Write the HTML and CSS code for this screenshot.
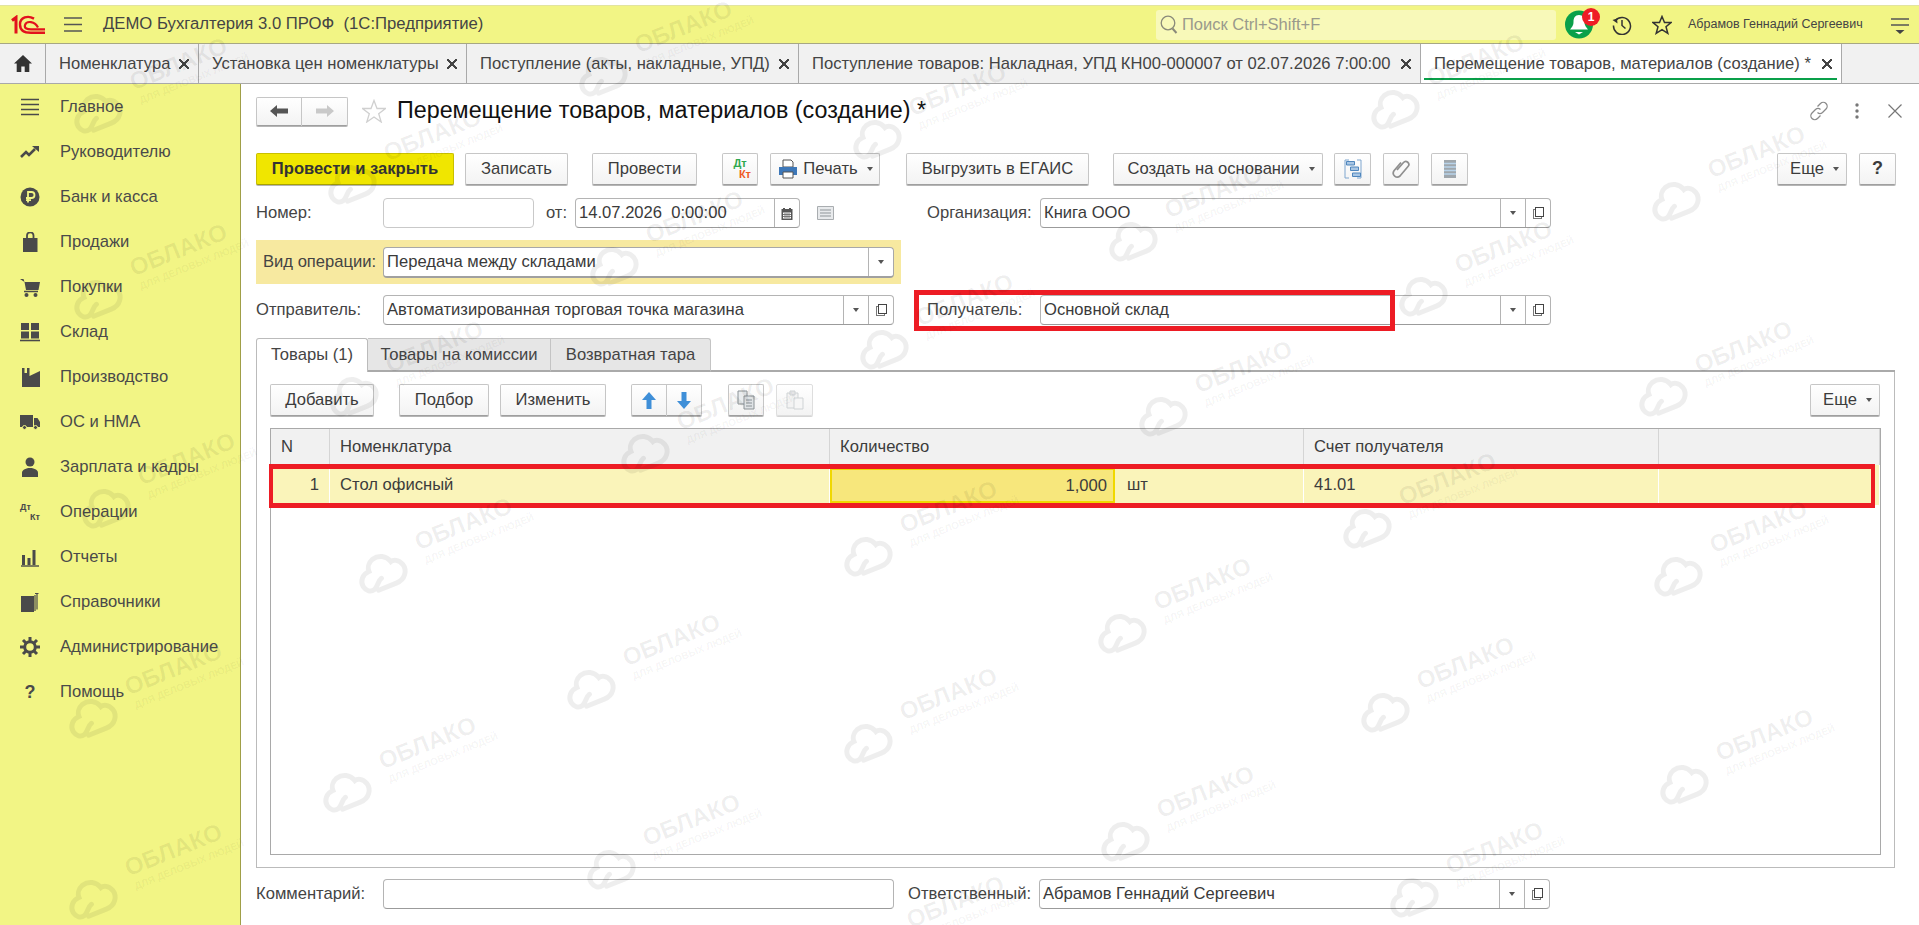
FILE: index.html
```html
<!DOCTYPE html>
<html lang="ru">
<head>
<meta charset="utf-8">
<title>Перемещение товаров, материалов (создание)</title>
<link rel="stylesheet" href="styles.css">
</head>
<body>
<div class="app">
  <header class="topbar">
    <svg class="logo" viewBox="0 0 34 19" width="34" height="19"><path d="M1 5.5 L5 2.5 V18.5" fill="none" stroke="#e2121d" stroke-width="3"/><path d="M23 3.6 C17 .2 9 2 9 9.5 C9 16 14 17.8 20 17.8 H34" fill="none" stroke="#e2121d" stroke-width="2.4"/><path d="M27 12.5 C24 6 15.5 5.5 14 10 C13 13.6 16.5 14.4 20 14.4 H34" fill="none" stroke="#e2121d" stroke-width="2.2"/></svg>
    <svg class="burger" viewBox="0 0 18 15" width="18" height="15"><path d="M0 1h18M0 7.5h18M0 14h18" stroke="#555" stroke-width="1.4"/></svg>
    <span class="app-title">ДЕМО Бухгалтерия 3.0 ПРОФ &nbsp;(1С:Предприятие)</span>
    <div class="search">
      <svg viewBox="0 0 18 20" width="18" height="20"><circle cx="8" cy="8" r="6.8" fill="none" stroke="#8a8a7a" stroke-width="1.3"/><path d="M12.5 13.5l4 4.5" stroke="#8a8a7a" stroke-width="2"/></svg>
      <span>Поиск Ctrl+Shift+F</span>
    </div>
    <div class="bell">
      <svg viewBox="0 0 28 29" width="28" height="29"><circle cx="14" cy="14.5" r="14" fill="#0aa04a"/><path d="M14 5c-4 0-5.500 3-5.500 7 0 4-2.500 6-3.500 7.500h18c-1-1.500-3.500-3.500-3.500-7.500 0-4-1.500-7-5.500-7z" fill="#fff"/><path d="M10 22h8l-4 2.500z" fill="#fff"/></svg>
      <span class="badge">1</span>
    </div>
    <svg class="hist" viewBox="0 0 20 20" width="20" height="20"><path d="M3.500 5.500A8.500 8.500 0 1 1 1.500 10.500" fill="none" stroke="#333" stroke-width="1.500"/><path d="M0.500 5l4.500-1.500.5 5z" fill="#333"/><path d="M10 5v5.500l3.500 3" fill="none" stroke="#333" stroke-width="1.500"/></svg>
    <svg class="star" viewBox="0 0 20 20" width="20" height="20"><path d="M10 1.500l2.500 6h6.500l-5 4.300 1.800 6.500L10 14.700l-5.800 3.600 1.800-6.500-5-4.300h6.500z" fill="none" stroke="#333" stroke-width="1.500"/></svg>
    <span class="user">Абрамов Геннадий Сергеевич</span>
    <svg class="menu" viewBox="0 0 18 17" width="18" height="17"><path d="M0 1h18M0 7h18" stroke="#555" stroke-width="1.400"/><path d="M4.500 12h9l-4.500 4z" fill="#444"/></svg>
  </header>

  <nav class="tabs">
    <div class="tab t0"><svg viewBox="0 0 18 17" width="18" height="17"><path d="M9 0L0 8.500h2.700V17h4.600v-5.500h3.400V17h4.600V8.500H18z" fill="#333"/></svg></div>
    <div class="tab t1"><span>Номенклатура</span><i class="x"></i></div>
    <div class="tab t2"><span>Установка цен номенклатуры</span><i class="x"></i></div>
    <div class="tab t3"><span>Поступление (акты, накладные, УПД)</span><i class="x"></i></div>
    <div class="tab t4"><span>Поступление товаров: Накладная, УПД КН00-000007 от 02.07.2026 7:00:00</span><i class="x"></i></div>
    <div class="tab t5 active"><span>Перемещение товаров, материалов (создание) *</span><i class="x"></i></div>
  </nav>

  <div class="main">
    <aside class="side">
      <a class="item"><svg viewBox="0 0 20 20"><path d="M1 2.500h18M1 7.500h18M1 12.500h18M1 17.500h18" stroke="#4a4a4a" stroke-width="1.300"/></svg><span>Главное</span></a>
      <a class="item"><svg viewBox="0 0 20 20"><path d="M1 15l5-5 3 3 6-6" fill="none" stroke="#4a4a4a" stroke-width="2.600"/><path d="M12 4h7v6z" fill="#4a4a4a"/></svg><span>Руководителю</span></a>
      <a class="item"><svg viewBox="0 0 20 20"><circle cx="10" cy="10" r="9.500" fill="#4a4a4a"/><path d="M8 15.500V5h3.500a3 3 0 0 1 0 6H6M6 13.200h5" fill="none" stroke="#f2f585" stroke-width="1.800"/></svg><span>Банк и касса</span></a>
      <a class="item"><svg viewBox="0 0 20 20"><path d="M3 6h14.500v14H3z" fill="#4a4a4a"/><path d="M7 9V3.500a3 3 0 0 1 6.500 0V9" fill="none" stroke="#4a4a4a" stroke-width="1.800"/></svg><span>Продажи</span></a>
      <a class="item"><svg viewBox="0 0 20 20"><path d="M0 2h3.500l1 3H20l-1.500 8H6L4.500 5" fill="#4a4a4a"/><path d="M4 14.500h14" stroke="#4a4a4a" stroke-width="1.500"/><circle cx="6.500" cy="18" r="2" fill="#4a4a4a"/><circle cx="15.500" cy="18" r="2" fill="#4a4a4a"/></svg><span>Покупки</span></a>
      <a class="item"><svg viewBox="0 0 20 20"><path d="M1 1h8v7H1zM11 1h8v7h-8zM1 9.500h8v7H1zM11 9.500h8v7h-8z" fill="#4a4a4a"/><path d="M0 18.500h20" stroke="#4a4a4a" stroke-width="1.600"/></svg><span>Склад</span></a>
      <a class="item"><svg viewBox="0 0 20 20"><path d="M2 1h2.500v5H7V1h2.500v8L20 4v16H2z" fill="#4a4a4a"/></svg><span>Производство</span></a>
      <a class="item"><svg viewBox="0 0 20 20"><path d="M0 3h13v12H0zM14 6h3.500L20 10v5h-6z" fill="#4a4a4a"/><circle cx="4.500" cy="15.500" r="2" fill="#4a4a4a" stroke="#f2f585"/><circle cx="15.500" cy="15.500" r="2" fill="#4a4a4a" stroke="#f2f585"/></svg><span>ОС и НМА</span></a>
      <a class="item"><svg viewBox="0 0 20 20"><circle cx="10" cy="5" r="4.500" fill="#4a4a4a"/><path d="M2 20v-4.500c0-2 3-4.500 8-4.500s8 2.500 8 4.500V20z" fill="#4a4a4a"/></svg><span>Зарплата и кадры</span></a>
      <a class="item"><span class="dtkt"><b>Дт</b><b>Кт</b></span><span>Операции</span></a>
      <a class="item"><svg viewBox="0 0 20 20"><path d="M2 8h3v10H2zM7.500 11h3v7h-3zM12.500 3h3v15h-3z" fill="#4a4a4a"/><path d="M1 19h18" stroke="#4a4a4a" stroke-width="1.400"/></svg><span>Отчеты</span></a>
      <a class="item"><svg viewBox="0 0 20 20"><path d="M1 4h13v16H1z" fill="#4a4a4a"/><path d="M15 3v16M17 1.500v16M15 1.500h3.500" fill="none" stroke="#4a4a4a" stroke-width="1.200"/></svg><span>Справочники</span></a>
      <a class="item"><svg viewBox="0 0 20 20"><circle cx="10" cy="10" r="5.300" fill="none" stroke="#4a4a4a" stroke-width="3"/><path d="M10 0v4M10 16v4M0 10h4M16 10h4M3 3l3 3M14 14l3 3M17 3l-3 3M6 14l-3 3" stroke="#4a4a4a" stroke-width="3"/></svg><span>Администрирование</span></a>
      <a class="item"><b class="help">?</b><span>Помощь</span></a>
    </aside>

    <main class="content">
      <div class="titlebar">
        <div class="btngroup nav">
          <button class="btn arrow"><svg viewBox="0 0 18 14" width="18" height="14"><path d="M0 7l7-6v3.500h11v5H7V13z" fill="#555"/></svg></button>
          <button class="btn arrow"><svg viewBox="0 0 18 14" width="18" height="14"><path d="M18 7l-7-6v3.500H0v5h11V13z" fill="#c9c9c9"/></svg></button>
        </div>
        <svg class="fav" viewBox="0 0 24 24" width="24" height="24"><path d="M12 1.500l3 8h8.500l-6.800 5.200 2.500 8.300-7.200-5-7.200 5 2.500-8.300L.5 9.500H9z" fill="none" stroke="#d0d0d0" stroke-width="1.300"/></svg>
        <h1>Перемещение товаров, материалов (создание) *</h1>
        <div class="winctl">
          <svg viewBox="0 0 20 20" width="20" height="20"><path d="M8.500 5.500l3-3a3.800 3.800 0 0 1 5.500 5.500l-3.500 3.500a3.800 3.800 0 0 1-5 0M11.500 14.500l-3 3a3.800 3.800 0 0 1-5.500-5.500l3.500-3.500a3.800 3.800 0 0 1 5 0" fill="none" stroke="#8a8a8a" stroke-width="1.300"/></svg>
          <svg class="kebab" viewBox="0 0 4 16" width="4" height="16"><circle cx="2" cy="2" r="1.700" fill="#777"/><circle cx="2" cy="8" r="1.700" fill="#777"/><circle cx="2" cy="14" r="1.700" fill="#777"/></svg>
          <svg class="winx" viewBox="0 0 14 14" width="14" height="14"><path d="M.5.500l13 13M13.500.500l-13 13" stroke="#777" stroke-width="1.200"/></svg>
        </div>
      </div>

      <div class="toolbar">
        <button class="btn primary b-post">Провести и закрыть</button>
        <button class="btn b-save">Записать</button>
        <button class="btn b-post2">Провести</button>
        <button class="btn b-ico b-dt"><span class="dk"><b class="dk-d">Дт</b><b class="dk-k">Кт</b></span></button>
        <button class="btn b-print"><svg viewBox="0 0 18 20" width="18" height="20"><path d="M4 1h8l2 2v5H4z" fill="#fff" stroke="#555"/><path d="M0 8h18v8H0z" fill="#3d77b8"/><path d="M4 13h10v6H4z" fill="#fff" stroke="#555"/></svg><span>Печать</span><i class="tri"></i></button>
        <button class="btn b-egais">Выгрузить в ЕГАИС</button>
        <button class="btn b-create"><span>Создать на основании</span><i class="tri"></i></button>
        <button class="btn b-ico b-struct"><svg viewBox="0 0 18 20" width="18" height="20"><path d="M5 1H1v18h4M13 1h4v18h-4" fill="none" stroke="#7ea6cf"/><path d="M2.500 2.500h8v3.500h-8zM6.500 8h8v3.500h-8zM8.500 14h8v3.500h-8z" fill="#a8c6e4" stroke="#4f86bd"/></svg></button>
        <button class="btn b-ico b-clip"><svg viewBox="0 0 18 20" width="18" height="20"><path d="M5 11l6.500-7.500a3 3 0 0 1 4.500 4L8 17a4 4 0 0 1-6-5.200L9 3.500" fill="none" stroke="#8f8f8f" stroke-width="1.700"/></svg></button>
        <button class="btn b-ico b-list"><svg viewBox="0 0 14 20" width="14" height="20"><path d="M1 1h12v18H1z" fill="#9fa7ad"/><path d="M1 4.500h12M1 8h12M1 11.500h12M1 15h12" stroke="#b8d3ea" stroke-width="1.700"/></svg></button>
        <div class="spacer"></div>
        <button class="btn b-more"><span>Еще</span><i class="tri"></i></button>
        <button class="btn b-q"><b>?</b></button>
      </div>

      <div class="row r1">
        <label class="lbl l-main">Номер:</label>
        <div class="field f-num"></div>
        <label class="lbl l-from">от:</label>
        <div class="field f-date"><span class="val">14.07.2026 &nbsp;0:00:00</span><span class="fbtn"><svg viewBox="0 0 12 13" width="12" height="13"><path d="M.5 2h11v11H.5z" fill="#555"/><path d="M2 5.500h8v6H2z" fill="#fff"/><path d="M3 1v2M9 1v2" stroke="#555" stroke-width="2"/><path d="M2 7.500h8M2 9.500h8M4 6v5M6 6v5M8 6v5" stroke="#777"/></svg></span></div>
        <svg class="docico" viewBox="0 0 17 14" width="17" height="14"><path d="M.5.500h16v13H.5z" fill="#e8eaec" stroke="#a9adb0"/><path d="M3 4h11M3 7h11M3 10h11" stroke="#8f9599"/></svg>
        <label class="lbl l-org">Организация:</label>
        <div class="field f-wide"><span class="val">Книга ООО</span><span class="fbtn"><i class="tri"></i></span><span class="fbtn"><i class="open"></i></span></div>
      </div>

      <div class="optype">
        <label class="lbl l-op">Вид операции:</label>
        <div class="field f-wide strong"><span class="val">Передача между складами</span><span class="fbtn"><i class="tri"></i></span></div>
      </div>

      <div class="row r3">
        <label class="lbl l-main">Отправитель:</label>
        <div class="field f-wide"><span class="val">Автоматизированная торговая точка магазина</span><span class="fbtn"><i class="tri"></i></span><span class="fbtn"><i class="open"></i></span></div>
        <label class="lbl l-rcv">Получатель:</label>
        <div class="field f-wide"><span class="val">Основной склад</span><span class="fbtn"><i class="tri"></i></span><span class="fbtn"><i class="open"></i></span></div>
        <div class="mark mark-rcv"></div>
      </div>

      <section class="panel">
        <div class="tabhead">
          <div class="ptab on w1">Товары (1)</div>
          <div class="ptab w2">Товары на комиссии</div>
          <div class="ptab w3">Возвратная тара</div>
          <div class="tabfill"></div>
        </div>
        <div class="panel-body">
          <div class="toolbar2">
            <button class="btn b-add">Добавить</button>
            <button class="btn b-pick">Подбор</button>
            <button class="btn b-edit">Изменить</button>
            <div class="btngroup updown">
              <button class="btn arrow"><svg viewBox="0 0 14 17" width="14" height="17"><path d="M7 0l7 8H9.500v9h-5V8H0z" fill="#3f8fd8"/></svg></button>
              <button class="btn arrow"><svg viewBox="0 0 14 17" width="14" height="17"><path d="M7 17l7-8H9.500V0h-5v9H0z" fill="#3f8fd8"/></svg></button>
            </div>
            <button class="btn b-copy"><svg viewBox="0 0 18 20" width="18" height="20"><path d="M1 1h9v13H1z" fill="#e9ecee" stroke="#8b9296"/><path d="M7 6h10v13H7z" fill="#dfe3e6" stroke="#8b9296"/><path d="M9 10h6M9 13h6M9 16h6" stroke="#8b9296"/></svg></button>
            <button class="btn b-paste dis"><svg viewBox="0 0 18 20" width="18" height="20"><path d="M1 3h11v15H1z" fill="#f3f3f3" stroke="#cfd3d5"/><path d="M4 1h5v4H4z" fill="#e5e5e5" stroke="#cfd3d5"/><path d="M8 8h9v11H8z" fill="#f6f6f6" stroke="#cfd3d5"/></svg></button>
            <div class="spacer"></div>
            <button class="btn b-more2"><span>Еще</span><i class="tri"></i></button>
          </div>
          <div class="grid">
            <div class="ghead">
              <div class="gc">N</div><div class="gc">Номенклатура</div><div class="gc">Количество</div><div class="gc">Счет получателя</div><div class="gc"></div>
            </div>
            <div class="grow">
              <div class="gc num">1</div>
              <div class="gc">Стол офисный</div>
              <div class="gc qty"><span class="qtyval">1,000</span><span class="unit">шт</span></div>
              <div class="gc">41.01</div>
              <div class="gc"></div>
            </div>
            <div class="mark mark-row"></div>
          </div>
        </div>
      </section>

      <div class="row r-bottom">
        <label class="lbl l-main">Комментарий:</label>
        <div class="field f-wide"></div>
        <label class="lbl l-resp">Ответственный:</label>
        <div class="field f-resp"><span class="val">Абрамов Геннадий Сергеевич</span><span class="fbtn"><i class="tri"></i></span><span class="fbtn"><i class="open"></i></span></div>
      </div>
    </main>
  </div>

  <svg class="wm" width="1919" height="925" viewBox="0 0 1919 925">
    <defs>
      <g id="u">
        <g transform="rotate(-22)">
          <text class="wm-t" text-anchor="middle" x="-3" y="-2">ОБЛАКО</text>
          <text class="wm-s" text-anchor="middle" x="6" y="13">ДЛЯ ДЕЛОВЫХ ЛЮДЕЙ</text>
        </g>
        <path class="wm-c" transform="translate(-89 40) rotate(-22)" d="M-9 16H10C20 16 25 8 23 1C21-5 16-7 13-6C11-13 4-17-3-15C-9-13-11-8-11-5C-18-5-23 1-22 7C-21 12-17 15-13 14C-9 13-6 7-2 6"/>
      </g>
    </defs>
    <use href="#u" x="185" y="72"/><use href="#u" x="185" y="258"/><use href="#u" x="193" y="467"/><use href="#u" x="180" y="677"/><use href="#u" x="180" y="858"/>
    <use href="#u" x="439" y="143"/><use href="#u" x="441" y="355"/><use href="#u" x="470" y="532"/><use href="#u" x="434" y="751"/>
    <use href="#u" x="690" y="35"/><use href="#u" x="701" y="225"/><use href="#u" x="732" y="412"/><use href="#u" x="678" y="648"/><use href="#u" x="698" y="828"/>
    <use href="#u" x="964" y="98"/><use href="#u" x="971" y="308"/><use href="#u" x="955" y="515"/><use href="#u" x="955" y="702"/><use href="#u" x="962" y="910"/>
    <use href="#u" x="1220" y="200"/><use href="#u" x="1250" y="375"/><use href="#u" x="1209" y="592"/><use href="#u" x="1212" y="800"/>
    <use href="#u" x="1482" y="68"/><use href="#u" x="1510" y="255"/><use href="#u" x="1454" y="487"/><use href="#u" x="1472" y="671"/><use href="#u" x="1501" y="856"/>
    <use href="#u" x="1763" y="160"/><use href="#u" x="1750" y="355"/><use href="#u" x="1765" y="535"/><use href="#u" x="1771" y="743"/>
  </svg>
</div>
</body>
</html>
```
FILE: styles.css
```css
* { box-sizing: border-box; }
html, body { margin: 0; padding: 0; height: 100%; overflow: hidden; background: #fff; }
body { font: 16.6px/1.2 "Liberation Sans", Arial, sans-serif; color: #333; }
.app { position: relative; width: 1919px; height: 925px; display: flex; flex-direction: column; padding-top: 5px; overflow: hidden; }
button { font: inherit; color: inherit; margin: 0; padding: 0; }

/* top bar */
.topbar { height: 39px; flex: none; display: flex; align-items: center; background: #f2f585; border-top: 1px solid #e2e4a0; border-bottom: 1px solid #a7a783; }
.logo { margin-left: 11px; }
.burger { margin-left: 19px; }
.app-title { margin-left: 21px; font-size: 16.7px; color: #444; width: 1053px; }
.search { width: 400px; height: 30px; background: #f8f9b9; border-radius: 3px; display: flex; align-items: center; gap: 4px; padding-left: 4px; color: #9a9a8c; font-size: 16.5px; }
.bell { position: relative; margin-left: 9px; width: 28px; height: 29px; }
.badge { position: absolute; left: 17px; top: -2px; width: 18px; height: 18px; border-radius: 50%; background: #ee1c25; color: #fff; font-weight: bold; font-size: 12px; line-height: 18px; text-align: center; }
.hist { margin-left: 19px; }
.star { margin-left: 20px; }
.user { margin-left: 16px; width: 203px; font-size: 12.500px; color: #444; white-space: nowrap; }
.menu { margin-top: 4px; }

/* open tabs */
.tabs { height: 40px; flex: none; display: flex; background: #f1f1f1; border-bottom: 1px solid #a9a9a9; }
.tab { height: 39px; display: flex; align-items: center; justify-content: space-between; padding: 0 9px 0 13px; border-right: 1px solid #a9a9a9; color: #444; white-space: nowrap; position: relative; }
.t0 { width: 46px; justify-content: center; padding: 0; }
.t1 { width: 153px; }
.t2 { width: 268px; }
.t3 { width: 332px; }
.t4 { width: 622px; }
.t5 { width: 421px; }
.tab.active { background: #fff; }
.tab.active::after { content: ""; position: absolute; left: 3px; right: 4px; bottom: 3px; height: 2px; background: #0aa04a; }
.x { width: 10px; height: 10px; flex: none; background: linear-gradient(45deg, transparent 44%, #444 44%, #444 56%, transparent 56%), linear-gradient(-45deg, transparent 44%, #444 44%, #444 56%, transparent 56%); }

/* main */
.main { flex: 1; display: flex; min-height: 0; }
.side { width: 241px; flex: none; background: #f2f585; border-right: 1px solid #a09f48; }
.item { height: 45px; display: flex; align-items: center; padding-left: 20px; gap: 20px; color: #4a4a4a; }
.item svg, .dtkt, .help { width: 20px; height: 20px; flex: none; }
.dtkt { display: flex; flex-direction: column; font-size: 9px; line-height: 10px; color: #4a4a4a; }
.dtkt b:last-child { align-self: flex-end; }
.help { text-align: center; font-size: 18px; line-height: 20px; color: #4a4a4a; }

.content { flex: 1; min-width: 0; padding: 12px 0 0 15px; background: #fff; }

/* buttons */
.btn { height: 32px; border: 1px solid #c6c6c6; border-bottom-color: #9f9f9f; border-radius: 2px; background: linear-gradient(#fff, #f3f3f3); box-shadow: 0 1px 0 #b5b5b5; color: #3c3c3c; display: inline-flex; align-items: center; justify-content: center; gap: 6px; white-space: nowrap; flex: none; }
.primary { background: #f0e600; border-color: #c9c000; border-bottom-color: #a8a200; font-weight: bold; color: #333; }
.btngroup { display: flex; flex: none; }
.btngroup .btn:first-child { border-right: 0; border-radius: 2px 0 0 2px; border-right: 1px solid #c6c6c6; }
.btngroup .btn:last-child { border-left: 0; border-radius: 0 2px 2px 0; }
.tri { display: inline-block; width: 0; height: 0; border: 3.500px solid transparent; border-top: 4px solid #555; border-bottom: 0; flex: none; }
.btn .tri { margin-left: 3px; }

/* title */
.titlebar { display: flex; align-items: center; height: 30px; padding-right: 17px; }
.nav .btn { height: 29px; width: 46px; }
.fav { margin-left: 14px; }
h1 { margin: 0 0 0 11px; font-weight: normal; font-size: 23.3px; color: #111; white-space: nowrap; }
.winctl { margin-left: auto; display: flex; align-items: center; }
.kebab { margin-left: 26px; }
.winx { margin-left: 29px; }

/* toolbar */
.toolbar { display: flex; margin-top: 27px; padding-right: 23px; }
.spacer { flex: 1; }
.b-post { width: 198px; }
.b-save { width: 103px; margin-left: 11px; }
.b-post2 { width: 105px; margin-left: 24px; }
.b-ico { width: 36px; }
.b-dt { margin-left: 25px; }
.b-print { width: 110px; margin-left: 12px; padding-left: 2px; }
.b-egais { width: 183px; margin-left: 26px; }
.b-create { width: 210px; margin-left: 24px; padding-left: 6px; }
.b-struct { margin-left: 11px; width: 37px; }
.b-clip { margin-left: 12px; }
.b-list { margin-left: 12px; width: 37px; }
.b-more { width: 70px; padding-left: 5px; }
.b-q { width: 37px; margin-left: 12px; font-size: 18px; }
.dk { display: flex; flex-direction: column; font-size: 11px; line-height: 11px; width: 22px; }
.dk-d { color: #2fa84f; }
.dk-k { color: #ef5a24; align-self: flex-end; }

/* form rows */
.row { position: relative; display: flex; align-items: center; height: 30px; }
.r1 { margin-top: 13px; }
.r3 { margin-top: 11px; }
.lbl { color: #444; white-space: nowrap; flex: none; }
.l-main { width: 127px; }
.l-from { width: 29px; margin-left: 12px; }
.l-org { width: 113px; margin-left: 93px; }
.l-rcv { width: 113px; margin-left: 33px; }
.l-op { width: 120px; }
.l-resp { width: 131px; margin-left: 14px; }
.field { height: 30px; display: flex; align-items: stretch; background: #fff; border: 1px solid #b4b4b4; border-bottom-color: #9b9b9b; border-radius: 4px; flex: none; }
.f-num { width: 151px; border-color: #c9c9c9; }
.f-date { width: 225px; }
.f-wide { width: 511px; }
.f-resp { width: 511px; }
.val { flex: 1; min-width: 0; padding-left: 3px; line-height: 28px; white-space: nowrap; color: #3a3a3a; }
.fbtn { width: 25px; flex: none; border-left: 1px solid #b4b4b4; display: flex; align-items: center; justify-content: center; }
.docico { margin-left: 17px; flex: none; }
.open { position: relative; width: 11px; height: 12px; flex: none; }
.open::before { content: ""; position: absolute; left: 0; bottom: 0; width: 7px; height: 8px; border: 1px solid #777; }
.open::after { content: ""; position: absolute; right: 0; top: 0; width: 7px; height: 8px; background: #fff; border: 1px solid #444; }
.optype { display: flex; align-items: center; width: 645px; height: 44px; margin-top: 12px; padding: 0 7px; background: #f7e9a0; }
.strong { border-color: #a8a8a8; border-bottom: 2px solid #a0a0a0; height: 31px; }
.mark { position: absolute; border-style: solid; border-color: #ed1c24; pointer-events: none; }
.mark-rcv { left: 658px; top: -5px; width: 481px; height: 41px; border-width: 5px; }

/* tab panel */
.panel { width: 1639px; height: 530px; margin-top: 13px; display: flex; flex-direction: column; }
.tabhead { display: flex; height: 34px; flex: none; }
.ptab { height: 34px; line-height: 32px; text-align: center; background: #e6e6e6; border: 1px solid #c4c4c4; border-left: 0; border-bottom: 2px solid #aaa; color: #444; border-radius: 0 3px 0 0; }
.ptab.on { background: #fff; border: 1px solid #bbb; border-bottom: 0; border-radius: 3px 3px 0 0; }
.w1 { width: 112px; }
.w2 { width: 183px; border-radius: 0; }
.w3 { width: 160px; }
.tabfill { flex: 1; border-bottom: 2px solid #aaa; }
.panel-body { flex: 1; border: 1px solid #bbb; border-top: 0; padding: 12px 13px 12px; display: flex; flex-direction: column; }
.toolbar2 { display: flex; flex: none; }
.b-add { width: 104px; }
.b-pick { width: 90px; margin-left: 25px; }
.b-edit { width: 106px; margin-left: 11px; }
.updown { margin-left: 25px; }
.updown .btn { width: 35px; }
.updown .btn:first-child { width: 36px; }
.b-copy { width: 36px; margin-left: 26px; }
.b-paste { width: 37px; margin-left: 12px; }
.dis { border-color: #dedede; box-shadow: 0 1px 0 #d5d5d5; }
.b-more2 { width: 70px; margin-right: 1px; padding-left: 5px; }

/* table */
.grid { position: relative; margin-top: 12px; flex: 1; border: 1px solid #a9a9a9; }
.ghead, .grow { display: grid; grid-template-columns: 59px 500px 474px 355px 1fr; }
.ghead { height: 36px; background: #f1f1f1; }
.ghead .gc { border-right: 1px solid #d5d5d5; }
.gc { padding-left: 10px; line-height: 36px; color: #3c3c3c; white-space: nowrap; }
.grow { height: 40px; background: #faf4ba; }
.grow .gc { line-height: 40px; border-right: 1px solid #fff; }
.num { padding: 0 10px 0 0; text-align: right; }
.qty { position: relative; padding-left: 297px; }
.unit { display: block; }
.qtyval { position: absolute; left: 0; top: 3px; width: 285px; height: 35px; line-height: 31px; text-align: right; padding-right: 6px; background: #f7e77c; border: 2px solid #f0d800; }
.mark-row { left: -2px; top: 35px; width: 1606px; height: 44px; border-width: 5px 4px; }

.r-bottom { margin-top: 11px; }

/* watermark */
.wm { position: absolute; left: 0; top: 0; pointer-events: none; }
.wm-t { font: bold 24px "Liberation Sans", sans-serif; fill: rgba(0,0,0,.065); }
.wm-s { font: bold 10px "Liberation Sans", sans-serif; fill: rgba(0,0,0,.05); }
.wm-c { fill: none; stroke: rgba(0,0,0,.065); stroke-width: 5; stroke-linecap: round; }
```
